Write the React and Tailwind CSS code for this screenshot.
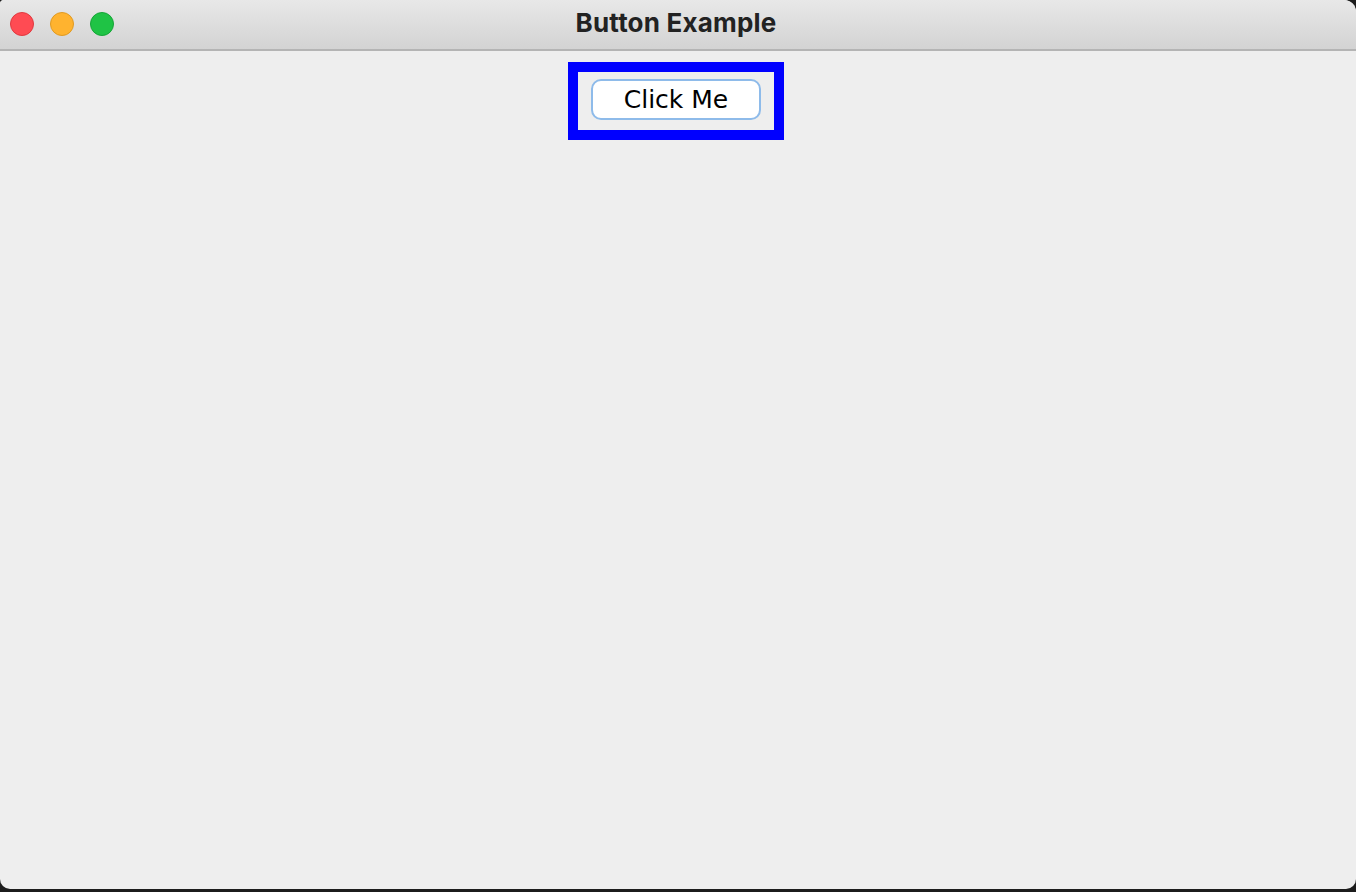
export default function App() {
  const lights = [
    { bg: 'bg-[#ff4b53]', ring: 'border-[#e0393f]' },
    { bg: 'bg-[#ffb32f]', ring: 'border-[#e09a22]' },
    { bg: 'bg-[#1fc345]', ring: 'border-[#16a537]' },
  ];

  return (
    <div className="w-[1356px] h-[892px] bg-[#1c1c1c] overflow-hidden">
      <div className="w-full h-[889px] bg-[#eeeeee] rounded-tl-[4px] rounded-tr-[12px] rounded-b-[10px] overflow-hidden flex flex-col">
        {/* Title bar */}
        <div className="relative h-[51px] shrink-0 bg-gradient-to-b from-[#e8e8e8] to-[#d3d3d3] border-b-2 border-[#b4b4b4] flex items-center justify-center pr-[4px]">
          <div className="absolute left-[10px] top-[12px] flex gap-[16px]">
            {lights.map((l, i) => (
              <span key={i} className={`w-[24px] h-[24px] rounded-full border ${l.bg} ${l.ring}`} />
            ))}
          </div>
          <h1 className="text-[26px] font-bold text-[#222222] font-['Inter','Noto_Sans',sans-serif] leading-none -mt-[4px] tracking-[0.2px]">
            Button Example
          </h1>
        </div>

        {/* Content */}
        <div className="flex justify-center pt-[11px] pr-[4px]">
          <div className="w-[216px] h-[78px] border-[10px] border-[#0000ff] pl-[13px] pt-[7px]">
            <button className="w-[170px] h-[41px] bg-white border-2 border-[#8ebbea] rounded-[10px] text-[25px] leading-none text-black font-['DejaVu_Sans',sans-serif] flex items-center justify-center pb-[1px]">
              Click Me
            </button>
          </div>
        </div>
      </div>
    </div>
  );
}
